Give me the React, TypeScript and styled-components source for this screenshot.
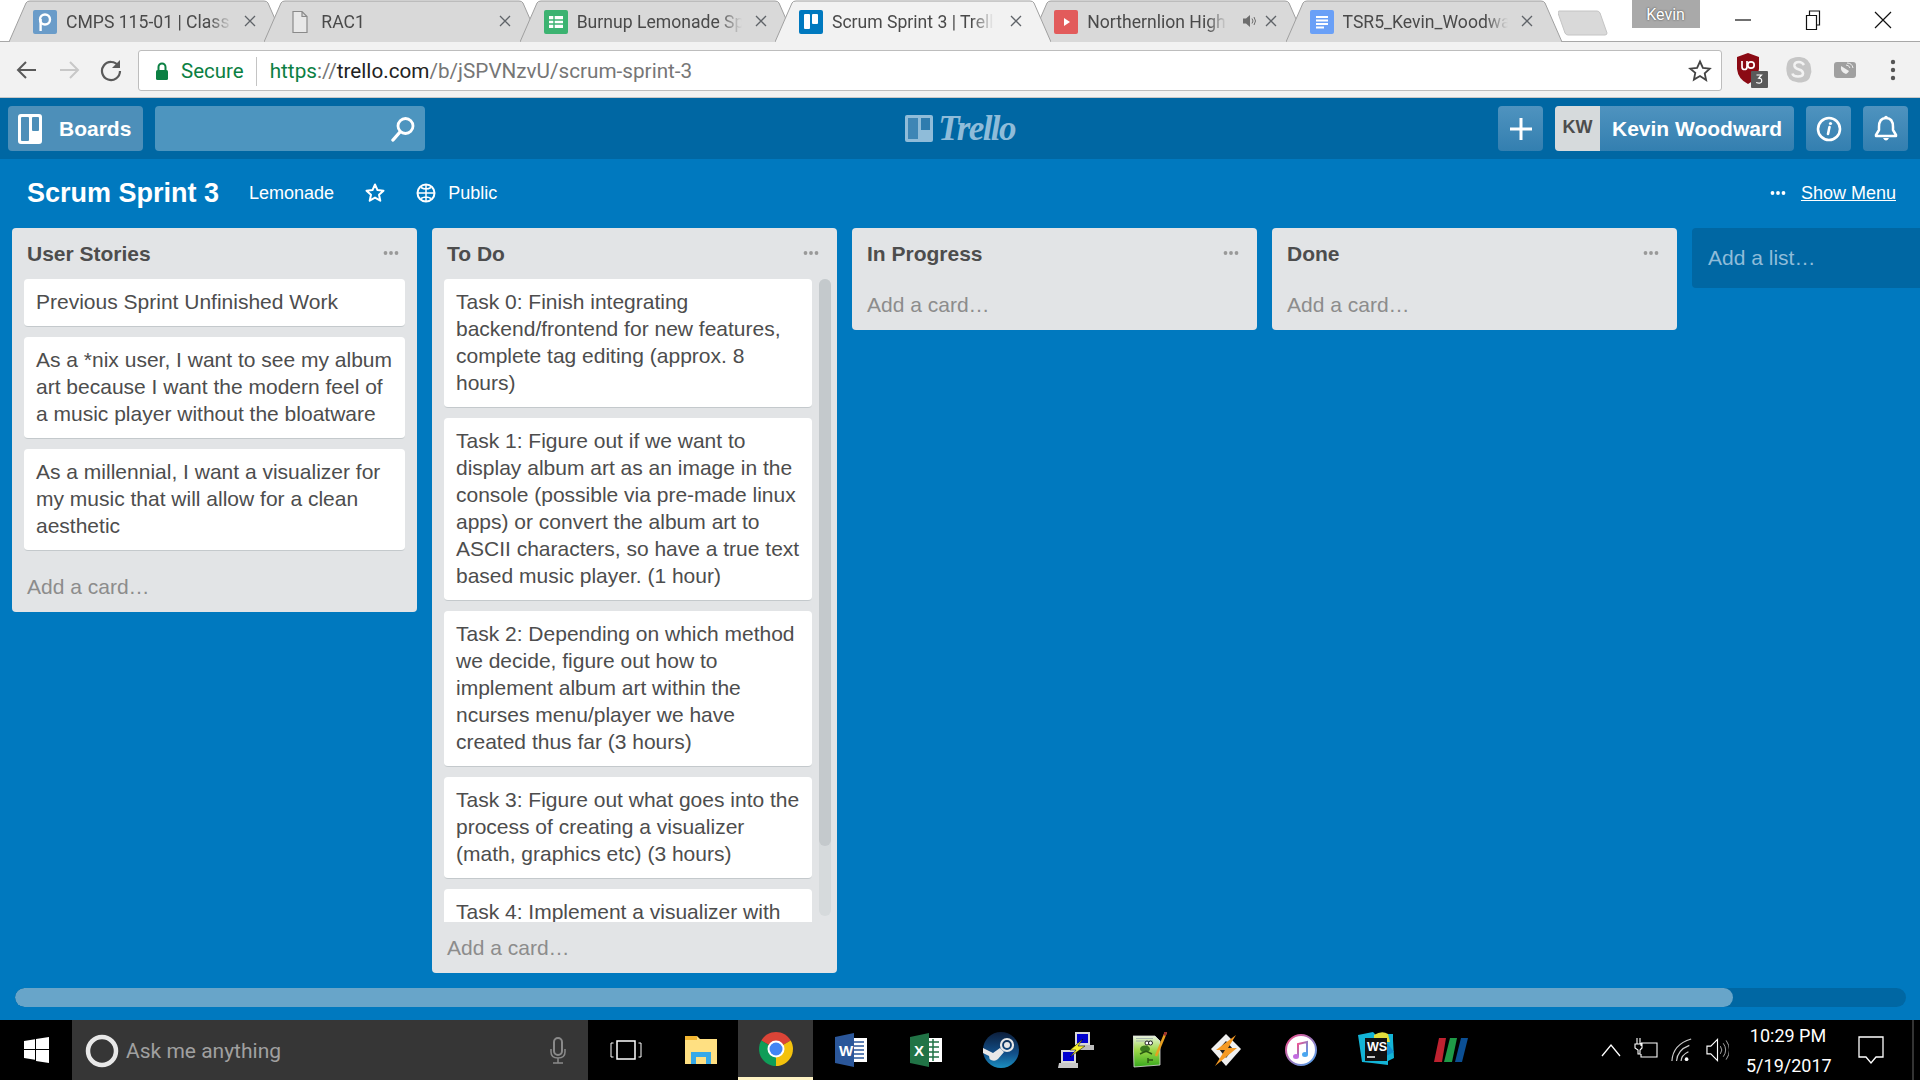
import React from "react";
import styled, { createGlobalStyle } from "styled-components";

const Global = createGlobalStyle`
  html, body { margin: 0; padding: 0; width: 1920px; height: 1080px; overflow: hidden; background: #0079bf; }
  * { box-sizing: border-box; }
`;

const Page = styled.div`
  width: 1920px; height: 1080px; display: flex; flex-direction: column; overflow: hidden;
  background: #0079bf; font-family: "Liberation Sans", Arial, sans-serif;
`;

/* ---------- browser tab strip ---------- */
const TabStrip = styled.div`
  height: 42px; flex: none; background: #fff; display: flex; align-items: flex-start;
  border-bottom: 1px solid #a8a8a8; padding-left: 9px; position: relative;
`;
const Tab = styled.div<{ $active?: boolean }>`
  position: relative; width: 276px; height: 42px; flex: none; margin-right: -20.7px;
  display: flex; align-items: center; padding: 1px 0 0 24px; z-index: ${p => (p.$active ? 5 : 1)};
  font-family: Roboto, sans-serif; font-size: 17.6px; color: #4a4a4a;
`;
const TabShape = styled.svg`
  position: absolute; left: 0; top: 0; width: 100%; height: 100%;
`;
const TabIcon = styled.span`
  position: relative; width: 24px; height: 24px; flex: none; display: flex; margin-right: 9px;
`;
const TabTitle = styled.span<{ $w?: number }>`
  position: relative; width: ${p => p.$w ?? 165}px; flex: none; white-space: nowrap; overflow: hidden;
  -webkit-mask-image: linear-gradient(to right, #000 86%, transparent 100%);
  mask-image: linear-gradient(to right, #000 86%, transparent 100%);
`;
const TabClose = styled.svg`
  position: absolute; right: 29px; top: 15px; width: 12px; height: 12px;
`;
const TabSpeaker = styled.svg`
  position: absolute; right: 48px; top: 13px; width: 16px; height: 16px;
`;
const NewTab = styled.svg`
  width: 50px; height: 26px; flex: none; margin: 10px 0 0 16.7px; position: relative; z-index: 0;
`;
const UserBadge = styled.div`
  width: 68px; height: 28px; flex: none; margin-left: 24px; background: #a9a9a9; color: #fff;
  font-family: Roboto, sans-serif; font-size: 16px; display: flex; align-items: center; justify-content: center;
  text-shadow: 0 0 2px #333;
`;
const WinButtons = styled.div`
  display: flex; flex: none; margin-left: 8px; height: 40px;
`;
const WinButton = styled.div`
  width: 70px; height: 40px; display: flex; align-items: center; justify-content: center;
`;

/* ---------- browser toolbar ---------- */
const Toolbar = styled.div`
  height: 56px; flex: none; background: #f2f2f2; display: flex; align-items: center; padding: 1px 0 0 15px;
  border-bottom: 1px solid #c8c8c8;
`;
const NavIcon = styled.svg`
  width: 24px; height: 24px; flex: none; margin-right: 18px;
`;
const Omnibox = styled.div`
  width: 1584px; height: 41px; flex: none; margin-left: -3px; background: #fff; border: 1px solid #bdbdbd; border-radius: 3px;
  display: flex; align-items: center; padding: 2px 0 0 16px; font-family: Roboto, sans-serif; font-size: 20.7px; color: #767676;
`;
const Secure = styled.span`
  color: #0b8043; margin-left: 12px; padding-right: 12px; border-right: 1px solid #c4c4c4; line-height: 29px; font-size: 20.5px;
`;
const Url = styled.span`
  margin-left: 13px; white-space: nowrap;
`;
const UrlGreen = styled.span` color: #0b8043; `;
const UrlDark = styled.span` color: #222; `;
const Spacer = styled.div` flex: 1; `;
const StarIcon = styled.svg`
  width: 24px; height: 24px; flex: none; margin-right: 9px;
`;
const ExtIcons = styled.div`
  display: flex; align-items: center; gap: 18px; padding-left: 14px;
`;
const ExtIcon = styled.svg<{ $ml?: number }>`
  flex: none; margin-left: ${p => p.$ml ?? 0}px;
`;

/* ---------- trello header ---------- */
const Header = styled.header`
  height: 61px; flex: none; background: #0067a3; display: flex; align-items: center; padding: 0 12px 0 8px; position: relative;
`;
const HeaderButton = styled.div<{ $w: number; $grad?: boolean }>`
  width: ${p => p.$w}px; height: 45px; flex: none; border-radius: 4px; display: flex; align-items: center; justify-content: center;
  background: ${p => (p.$grad ? "linear-gradient(#4f93bf, #337fb0)" : "#4d95bf")}; color: #fff;
`;
const BoardsBtn = styled(HeaderButton)`
  justify-content: flex-start; padding-left: 10px; gap: 17px; font-size: 21px; font-weight: 700; background: #4d8fb9;
`;
const SearchBox = styled.div`
  width: 270px; height: 45px; flex: none; margin-left: 12px; border-radius: 4px; background: #4d95bf;
  display: flex; align-items: center; justify-content: flex-end; padding-right: 9px;
`;
const Logo = styled.div`
  flex: 1; display: flex; align-items: center; justify-content: center; gap: 5px; color: #8fbcd9;
  padding-right: 3px; font-family: "Liberation Serif", serif; font-style: italic; font-size: 35px; letter-spacing: -1.6px;
  font-weight: 700;
`;
const Avatar = styled.span`
  width: 45px; height: 45px; background: #d6dadc; color: #4d4d4d; display: flex; align-items: center; justify-content: center;
  font-size: 18px; font-weight: 700; border-radius: 4px 0 0 4px; flex: none; padding-bottom: 3px;
`;
const UserBtn = styled(HeaderButton)`
  margin: 0 12px; justify-content: flex-start; font-size: 21px; font-weight: 700; gap: 12px;
`;
const BellBtn = styled(HeaderButton)` margin-left: 12px; `;

/* ---------- board bar ---------- */
const BoardBar = styled.div`
  height: 69px; flex: none; display: flex; align-items: center; color: #fff; padding: 0 24px 1px 27px;
`;
const BoardTitle = styled.h1`
  margin: 0; font-size: 27px; font-weight: 700; line-height: 34px;
`;
const BarText = styled.span`
  font-size: 18px; margin-left: 30px;
`;
const BarIcon = styled.svg`
  width: 20px; height: 20px; flex: none; margin-left: 31px;
`;
const BarPublic = styled.span`
  font-size: 18px; margin-left: 12px;
`;
const MenuDots = styled.svg`
  width: 16px; height: 4px; flex: none; margin-right: 15px;
`;
const ShowMenu = styled.span`
  font-size: 18px; text-decoration: underline;
`;

/* ---------- lists ---------- */
const Lists = styled.div`
  height: 760px; flex: none; display: flex; align-items: flex-start; gap: 15px; padding: 0 0 0 12px; overflow: hidden;
`;
const List = styled.section`
  width: 405px; flex: none; background: #e2e4e6; border-radius: 4px; display: flex; flex-direction: column; max-height: 745px;
`;
const ListHead = styled.div`
  height: 51px; flex: none; display: flex; align-items: center; justify-content: space-between; padding: 0 18px 0 15px;
  font-size: 21px; font-weight: 700; color: #4d4d4d;
`;
const HeadDots = styled.svg`
  width: 16px; height: 4px; flex: none; margin-bottom: 1px;
`;
const CardsArea = styled.div`
  display: flex; flex: none; position: relative; height: 643px; overflow: hidden;
`;
const CardsColumn = styled.div`
  display: flex; flex-direction: column; gap: 10px; padding: 0 12px; width: 100%;
`;
const ShortCards = styled(CardsColumn)`
  flex: none; margin-bottom: 10px;
`;
const Card = styled.article`
  flex: none; background: #fff; border-radius: 4px; border-bottom: 1px solid #c4c9cc; padding: 9px 12px 11px 12px;
  font-size: 21px; line-height: 27px; color: #4d4d4d; word-wrap: break-word;
`;
const TodoCard = styled(Card)`
  width: 368px;
`;
const ClippedCard = styled(TodoCard)`
  padding-bottom: 60px;
`;
const ScrollTrack = styled.div`
  position: absolute; right: 6px; top: 0; width: 12px; height: 637px; border-radius: 6px; background: #d6dadc;
`;
const ScrollThumb = styled.div`
  width: 12px; height: 567px; border-radius: 6px; background: #c4c9cc;
`;
const AddCard = styled.div`
  height: 51px; flex: none; display: flex; align-items: center; padding: 0 15px; font-size: 21px; color: #8c8c8c;
`;
const AddList = styled.div`
  width: 240px; height: 60px; flex: none; background: #0067a3; border-radius: 4px; display: flex; align-items: center;
  padding: 0 16px; font-size: 21px; color: #8fbcd9;
`;

/* ---------- horizontal scrollbar ---------- */
const HScrollWrap = styled.div`
  height: 32px; flex: none; padding: 0 14px 0 15px;
`;
const HTrack = styled.div`
  height: 19px; border-radius: 10px; background: #0067a3; overflow: hidden;
`;
const HThumb = styled.div`
  width: 1718px; height: 19px; border-radius: 10px; background: #68a5c9;
`;

/* ---------- taskbar ---------- */
const Taskbar = styled.footer`
  height: 60px; flex: none; background: #000; display: flex; align-items: center; color: #fff;
`;
const StartBtn = styled.div`
  width: 72px; height: 60px; flex: none; display: flex; align-items: center; justify-content: center;
`;
const Cortana = styled.div`
  width: 516px; height: 60px; flex: none; background: #363636; display: flex; align-items: center; padding: 2px 21px 0 13px;
  font-family: Roboto, sans-serif; font-size: 21px; color: #a0a0a0; gap: 7px;
`;
const TaskSlot = styled.div<{ $active?: boolean }>`
  width: 75px; height: 60px; flex: none; display: flex; align-items: center; justify-content: center;
  background: ${p => (p.$active ? "#363636" : "transparent")};
  border-bottom: ${p => (p.$active ? "3px solid #fff3c4" : "none")};
`;
const Tray = styled.div`
  flex: 1; display: flex; align-items: center; justify-content: flex-end; gap: 13px; height: 60px; padding-right: 6px;
`;
const Clock = styled.div`
  width: 84px; text-align: center; font-family: Roboto, sans-serif; font-size: 18px; line-height: 30px; color: #fff;
  margin: 1px -13px 0 4px; white-space: nowrap;
`;
const NotifyBtn = styled.div`
  width: 84px; height: 60px; display: flex; align-items: center; justify-content: center; border-right: 2px solid #333; flex: none;
`;

/* ---------- data ---------- */
const userStories = [
  "Previous Sprint Unfinished Work",
  "As a *nix user, I want to see my album art because I want the modern feel of a music player without the bloatware",
  "As a millennial, I want a visualizer for my music that will allow for a clean aesthetic",
];
const todo = [
  "Task 0: Finish integrating backend/frontend for new features, complete tag editing (approx. 8 hours)",
  "Task 1: Figure out if we want to display album art as an image in the console (possible via pre-made linux apps) or convert the album art to ASCII characters, so have a true text based music player. (1 hour)",
  "Task 2: Depending on which method we decide, figure out how to implement album art within the ncurses menu/player we have created thus far (3 hours)",
  "Task 3: Figure out what goes into the process of creating a visualizer (math, graphics etc) (3 hours)",
];

const Close = () => (
  <TabClose viewBox="0 0 12 12"><path d="M1 1l10 10M11 1L1 11" stroke="#5f6368" strokeWidth="1.3" fill="none" /></TabClose>
);
const Shape = ({ active }: { active?: boolean }) => (
  <TabShape viewBox="0 0 276 42">
    <path d="M0 42 L17 3 Q18 1 21 1 L255 1 Q258 1 259 3 L276 42" fill={active ? "#f2f2f2" : "#d9d9d9"} stroke="#a0a0a0" strokeWidth="1" />
  </TabShape>
);
const Dots = ({ c }: { c: string }) => (
  <>
    <circle cx="2.5" cy="2" r="1.9" fill={c} /><circle cx="8" cy="2" r="1.9" fill={c} /><circle cx="13.5" cy="2" r="1.9" fill={c} />
  </>
);

const IconBox = ({ bg, children }: { bg: string; children?: React.ReactNode }) => (
  <svg width="24" height="24" viewBox="0 0 24 24">
    <rect width="24" height="24" rx="2" fill={bg} />
    {children}
  </svg>
);

export default function App() {
  return (
    <Page>
      <Global />
      <TabStrip>
        <Tab>
          <Shape />
          <TabIcon>
            <IconBox bg="#6a9cc9">
              <circle cx="12" cy="9.5" r="5" fill="none" stroke="#fff" strokeWidth="2.4" />
              <path d="M7.6 9v12" stroke="#fff" strokeWidth="2.4" />
            </IconBox>
          </TabIcon>
          <TabTitle $w={166}>CMPS 115-01 | Class</TabTitle>
          <Close />
        </Tab>
        <Tab>
          <Shape />
          <TabIcon>
            <svg width="24" height="24" viewBox="0 0 24 24">
              <path d="M5 1.5h9l5 5v16H5z M14 1.5v5h5" fill="#e8e8e8" stroke="#8a8a8a" strokeWidth="1.2" />
            </svg>
          </TabIcon>
          <TabTitle>RAC1</TabTitle>
          <Close />
        </Tab>
        <Tab>
          <Shape />
          <TabIcon>
            <IconBox bg="#3cb371">
              <rect x="5" y="6" width="14" height="12" fill="#fff" />
              <path d="M5 10h14M5 14h14M10 6v12" stroke="#3cb371" strokeWidth="1.4" />
            </IconBox>
          </TabIcon>
          <TabTitle>Burnup Lemonade Sprint</TabTitle>
          <Close />
        </Tab>
        <Tab $active>
          <Shape active />
          <TabIcon>
            <IconBox bg="#0079bf">
              <rect x="5" y="4" width="6" height="15" rx="1" fill="#fff" />
              <rect x="13" y="4" width="6" height="10" rx="1" fill="#fff" />
            </IconBox>
          </TabIcon>
          <TabTitle $w={162}>Scrum Sprint 3 | Trello</TabTitle>
          <Close />
        </Tab>
        <Tab>
          <Shape />
          <TabIcon>
            <IconBox bg="#e25b5b">
              <path d="M10 8l6 4-6 4z" fill="#fff" />
            </IconBox>
          </TabIcon>
          <TabTitle $w={140}>Northernlion Highlights</TabTitle>
          <TabSpeaker viewBox="0 0 16 16"><path d="M1 5.5h3l4-3.5v12l-4-3.5H1z" fill="#6d6d6d" /><path d="M10 5.5q2 2.500 0 5M12 4q3 4 0 8" stroke="#6d6d6d" fill="none" /></TabSpeaker>
          <Close />
        </Tab>
        <Tab>
          <Shape />
          <TabIcon>
            <IconBox bg="#6aa0f7">
              <path d="M6 7h12M6 10.5h12M6 14h12M6 17.5h8" stroke="#fff" strokeWidth="1.8" />
            </IconBox>
          </TabIcon>
          <TabTitle>TSR5_Kevin_Woodward</TabTitle>
          <Close />
        </Tab>
        <NewTab viewBox="0 0 50 26">
          <path d="M1 1h38q2 0 3 2l7 20q0 2-2 2H10q-2 0-3-2L0 3q0-2 1-2z" fill="#d9d9d9" stroke="#c4c4c4" />
        </NewTab>
        <UserBadge>Kevin</UserBadge>
        <WinButtons>
          <WinButton><svg width="16" height="16" viewBox="0 0 16 16"><path d="M0 8h16" stroke="#111" strokeWidth="1.2" /></svg></WinButton>
          <WinButton><svg width="16" height="22" viewBox="0 0 16 22"><path d="M1.5 6.5h10v14h-10zM4.5 6V2h10v14h-3" stroke="#111" strokeWidth="1.2" fill="none" /></svg></WinButton>
          <WinButton><svg width="18" height="18" viewBox="0 0 18 18"><path d="M1 1l16 16M17 1L1 17" stroke="#111" strokeWidth="1.2" /></svg></WinButton>
        </WinButtons>
      </TabStrip>

      <Toolbar>
        <NavIcon viewBox="0 0 24 24"><path d="M21 12H4M11 4l-8 8 8 8" stroke="#5a5a5a" strokeWidth="2" fill="none" /></NavIcon>
        <NavIcon viewBox="0 0 24 24"><path d="M3 12h17M13 4l8 8-8 8" stroke="#c8c8c8" strokeWidth="2" fill="none" /></NavIcon>
        <NavIcon viewBox="0 0 24 24"><path d="M19.5 8A9 9 0 1 0 21 13" stroke="#5a5a5a" strokeWidth="2.2" fill="none" /><path d="M21 2v8h-8z" fill="#5a5a5a" /></NavIcon>
        <Omnibox>
          <svg width="14" height="20" viewBox="0 0 14 20"><path d="M3.5 9V6a3.5 3.5 0 0 1 7 0v3" stroke="#0b8043" strokeWidth="2" fill="none" /><rect x="1" y="9" width="12" height="10" rx="1.5" fill="#0b8043" /></svg>
          <Secure>Secure</Secure>
          <Url><UrlGreen>https</UrlGreen>://<UrlDark>trello.com</UrlDark>/b/jSPVNzvU/scrum-sprint-3</Url>
          <Spacer />
          <StarIcon viewBox="0 0 24 24"><path d="M12 2.5l2.9 6.3 6.9.8-5.1 4.7 1.4 6.8L12 17l-6.1 3.6 1.4-6.8L2.2 9.600l6.900-.8z" fill="none" stroke="#444" strokeWidth="1.8" /></StarIcon>
        </Omnibox>
        <ExtIcons>
          <ExtIcon width="32" height="36" viewBox="0 0 32 36">
            <path d="M1 5l11-4 11 4v12q-1 10-11 15Q2 27 1 17z" fill="#8b0a14" />
            <path d="M6 9v6q0 2.500 2.500 2.500T11 15V9" fill="none" stroke="#fff" strokeWidth="1.700" />
            <circle cx="15" cy="13" r="3.200" fill="none" stroke="#fff" strokeWidth="1.700" />
            <rect x="15" y="19" width="17" height="17" rx="1" fill="#5a5a5a" />
            <path d="M20.500 23h5l-2.800 3.200q3.300 0 3 3t-5.500 1.300" stroke="#fff" fill="none" strokeWidth="1.200" />
          </ExtIcon>
          <ExtIcon width="26" height="28" viewBox="0 0 26 28">
            <path d="M7 2q3-1.500 7-1 10 1 11 11 1 4-.500 7-1 6-7 7-4 1-7 0-4 0-7-3-3-4-3-8Q0 12 1 8q1-5 6-6z" fill="#c6c6c6" />
            <path d="M18 9q-2-3-5-3-5 0-4.500 4 .5 2.500 4.500 3.500t4 4-5 3-5.500-3" fill="none" stroke="#f2f2f2" strokeWidth="2.600" />
          </ExtIcon>
          <ExtIcon $ml={3} width="24" height="24" viewBox="0 0 24 24">
            <rect x="1" y="4" width="22" height="16" rx="3" fill="#a0a0a0" />
            <path d="M8 8q-1 6 5 8 2-1 3-3z" fill="#eee" /><path d="M13 7q3 0 4 3M14 5q5 0 6 5" stroke="#eee" fill="none" />
          </ExtIcon>
          <ExtIcon $ml={6} width="24" height="24" viewBox="0 0 24 24">
            <circle cx="12" cy="4" r="2.200" fill="#555" /><circle cx="12" cy="12" r="2.200" fill="#555" /><circle cx="12" cy="20" r="2.200" fill="#555" />
          </ExtIcon>
        </ExtIcons>
      </Toolbar>

      <Header>
        <BoardsBtn $w={135}>
          <svg width="24" height="30" viewBox="0 0 24 30">
            <rect width="24" height="30" rx="3" fill="#fff" />
            <rect x="3" y="3" width="8" height="24" rx="1" fill="#4d8fb9" />
            <rect x="14" y="3" width="7" height="14" rx="1" fill="#4d8fb9" />
          </svg>
          Boards
        </BoardsBtn>
        <SearchBox>
          <svg width="26" height="26" viewBox="0 0 26 26">
            <circle cx="15.500" cy="10" r="7.500" fill="none" stroke="#fff" strokeWidth="2.800" />
            <path d="M10 16l-7 8" stroke="#fff" strokeWidth="3.400" strokeLinecap="round" />
          </svg>
        </SearchBox>
        <Logo>
          <svg width="28" height="27" viewBox="0 0 28 27">
            <rect width="28" height="27" rx="2" fill="#8fbcd9" />
            <rect x="3" y="3" width="10" height="21" fill="#3e86b5" />
            <rect x="16" y="3" width="9" height="12" fill="#2f7cae" />
          </svg>
          Trello
        </Logo>
        <HeaderButton $w={45} $grad>
          <svg width="24" height="24" viewBox="0 0 24 24"><path d="M12 1v22M1 12h22" stroke="#fff" strokeWidth="3" /></svg>
        </HeaderButton>
        <UserBtn $w={239} $grad>
          <Avatar>KW</Avatar>
          Kevin Woodward
        </UserBtn>
        <HeaderButton $w={45} $grad>
          <svg width="26" height="26" viewBox="0 0 26 26">
            <circle cx="13" cy="13" r="11" fill="none" stroke="#fff" strokeWidth="2.600" />
            <path d="M13.500 11l-1.500 7" stroke="#fff" strokeWidth="2.600" strokeLinecap="round" /><circle cx="14.500" cy="7.500" r="1.600" fill="#fff" />
          </svg>
        </HeaderButton>
        <BellBtn $w={45} $grad>
          <svg width="24" height="28" viewBox="0 0 24 28">
            <path d="M12 3q7 0 7 9v3l3 5v1H2v-1l3-5v-3q0-9 7-9z" fill="none" stroke="#fff" strokeWidth="2.500" strokeLinejoin="round" />
            <path d="M9 23q3 5 6 0z" fill="#fff" /><circle cx="12" cy="2.500" r="1.800" fill="#fff" />
          </svg>
        </BellBtn>
      </Header>

      <BoardBar>
        <BoardTitle>Scrum Sprint 3</BoardTitle>
        <BarText>Lemonade</BarText>
        <BarIcon viewBox="0 0 20 20"><path d="M10 1.500l2.500 5.600 6 .6-4.500 4 1.300 6L10 14.600 4.700 17.700l1.300-6-4.500-4 6-.6z" fill="none" stroke="#fff" strokeWidth="2" strokeLinejoin="round" /></BarIcon>
        <BarIcon viewBox="0 0 20 20">
          <circle cx="10" cy="10" r="8.500" fill="none" stroke="#fff" strokeWidth="2" />
          <path d="M10 2v16M2 10h16M5 4.500q5 3 10 0M5 15.500q5-3 10 0" fill="none" stroke="#fff" strokeWidth="1.500" />
        </BarIcon>
        <BarPublic>Public</BarPublic>
        <Spacer />
        <MenuDots viewBox="0 0 16 4"><Dots c="#fff" /></MenuDots>
        <ShowMenu>Show Menu</ShowMenu>
      </BoardBar>

      <Lists>
        <List>
          <ListHead>User Stories<HeadDots viewBox="0 0 16 4"><Dots c="#999" /></HeadDots></ListHead>
          <ShortCards>
            {userStories.map(t => <Card key={t}>{t}</Card>)}
          </ShortCards>
          <AddCard>Add a card…</AddCard>
        </List>
        <List>
          <ListHead>To Do<HeadDots viewBox="0 0 16 4"><Dots c="#999" /></HeadDots></ListHead>
          <CardsArea>
            <CardsColumn>
              {todo.map(t => <TodoCard key={t}>{t}</TodoCard>)}
              <ClippedCard>Task 4: Implement a visualizer with</ClippedCard>
            </CardsColumn>
            <ScrollTrack><ScrollThumb /></ScrollTrack>
          </CardsArea>
          <AddCard>Add a card…</AddCard>
        </List>
        <List>
          <ListHead>In Progress<HeadDots viewBox="0 0 16 4"><Dots c="#999" /></HeadDots></ListHead>
          <AddCard>Add a card…</AddCard>
        </List>
        <List>
          <ListHead>Done<HeadDots viewBox="0 0 16 4"><Dots c="#999" /></HeadDots></ListHead>
          <AddCard>Add a card…</AddCard>
        </List>
        <AddList>Add a list…</AddList>
      </Lists>

      <HScrollWrap><HTrack><HThumb /></HTrack></HScrollWrap>

      <Taskbar>
        <StartBtn>
          <svg width="25" height="26" viewBox="0 0 25 26">
            <path d="M0 4l11-1.700V12H0zM12 2.100L25 0v12H12zM0 13h11v9.700L0 21zM12 13h13v13l-13-2z" fill="#fff" />
          </svg>
        </StartBtn>
        <Cortana>
          <svg width="34" height="34" viewBox="0 0 34 34">
            <circle cx="17" cy="17" r="14" fill="none" stroke="#e8e8e8" strokeWidth="4.500" />
          </svg>
          Ask me anything
          <Spacer />
          <svg width="18" height="28" viewBox="0 0 18 28">
            <rect x="5" y="1" width="8" height="17" rx="4" fill="none" stroke="#8a8a8a" strokeWidth="2" />
            <path d="M2 12v3q0 6 7 6t7-6v-3M9 21v5M4 26h10" fill="none" stroke="#8a8a8a" strokeWidth="1.500" />
          </svg>
        </Cortana>
        <TaskSlot>
          <svg width="32" height="20" viewBox="0 0 32 20">
            <rect x="7" y="1" width="18" height="18" fill="none" stroke="#fff" strokeWidth="1.500" />
            <path d="M3.500 3H1v14h2.500M28.500 3H31v14h-2.500" fill="none" stroke="#fff" />
          </svg>
        </TaskSlot>
        <TaskSlot>
          <svg width="32" height="30" viewBox="0 0 32 30">
            <path d="M0 1h12l3 3h17v25H0z" fill="#ffe082" />
            <path d="M0 1h12v4H0z" fill="#f2b632" />
            <path d="M6 29V17h20v12h-5v-7h-10v7z" fill="#37a9e8" />
          </svg>
        </TaskSlot>
        <TaskSlot $active>
          <svg width="34" height="34" viewBox="0 0 34 34">
            <path d="M17 17 L2.300 8.500A17 17 0 0 1 31.700 8.500z" fill="#db4437" />
            <path d="M17 17 L17 34A17 17 0 0 1 2.300 8.500z" fill="#0f9d58" />
            <path d="M17 17 L31.700 8.500A17 17 0 0 1 17 34z" fill="#f4c20d" />
            <circle cx="17" cy="17" r="8.500" fill="#fff" />
            <circle cx="17" cy="17" r="6.500" fill="#4285f4" />
          </svg>
        </TaskSlot>
        <TaskSlot>
          <svg width="32" height="34" viewBox="0 0 32 34">
            <rect x="14" y="5" width="18" height="24" fill="#fff" />
            <path d="M18 9h11M18 13h11M18 17h11M18 21h11M18 25h11" stroke="#2b579a" strokeWidth="1.500" />
            <path d="M0 4l19-4v34L0 30z" fill="#2b579a" />
            <text x="4" y="23" fontFamily="Liberation Sans" fontSize="15" fontWeight="700" fill="#fff">W</text>
          </svg>
        </TaskSlot>
        <TaskSlot>
          <svg width="32" height="34" viewBox="0 0 32 34">
            <rect x="14" y="5" width="18" height="24" fill="#fff" />
            <path d="M18 9h11M18 14h11M18 19h11M18 24h11M23 6v22" stroke="#217346" strokeWidth="1.500" />
            <path d="M0 4l19-4v34L0 30z" fill="#217346" />
            <text x="4" y="23" fontFamily="Liberation Sans" fontSize="15" fontWeight="700" fill="#fff">X</text>
          </svg>
        </TaskSlot>
        <TaskSlot>
          <svg width="36" height="36" viewBox="0 0 36 36">
            <defs><linearGradient id="steam" x1="0" y1="0" x2="0" y2="1"><stop offset="0" stopColor="#0d1f3c" /><stop offset=".6" stopColor="#12508a" /><stop offset="1" stopColor="#1b8fc0" /></linearGradient></defs>
            <circle cx="18" cy="18" r="18" fill="url(#steam)" />
            <circle cx="24" cy="13" r="6" fill="none" stroke="#e8e8e8" strokeWidth="2.200" />
            <circle cx="24" cy="13" r="3" fill="#e8e8e8" />
            <path d="M0 16l10 5 7-5 4 4-6 7q-3 3-7 1-2-1-2-4L0 21z" fill="#e8e8e8" />
          </svg>
        </TaskSlot>
        <TaskSlot>
          <svg width="36" height="36" viewBox="0 0 36 36">
            <rect x="17" y="0" width="15" height="13" fill="#d8d8d8" /><rect x="19" y="2" width="11" height="9" fill="#0000d0" /><path d="M20 13h16v5H18z" fill="#bdbdbd" />
            <rect x="3" y="18" width="15" height="13" fill="#d8d8d8" /><rect x="5" y="20" width="11" height="9" fill="#0000d0" /><path d="M1 31h19v5H0z" fill="#c8c8c8" />
            <path d="M25 7L12 18h6l-6 7 15-11h-7z" fill="#f7ef2e" stroke="#000" strokeWidth=".5" />
          </svg>
        </TaskSlot>
        <TaskSlot>
          <svg width="36" height="36" viewBox="0 0 36 36">
            <defs><linearGradient id="npp" x1="0" y1="0" x2="0" y2="1"><stop offset="0" stopColor="#e8f4dc" /><stop offset=".45" stopColor="#9fd94a" /><stop offset="1" stopColor="#36a81c" /></linearGradient></defs>
            <path d="M0 4h22l5 5v24L1 35z" fill="url(#npp)" stroke="#ddd" strokeWidth=".8" />
            <path d="M3 6.500h17M3 9h17" stroke="#9aa" strokeWidth=".8" />
            <ellipse cx="12" cy="17" rx="5" ry="3.500" fill="#3c7d1d" /><circle cx="14" cy="11" r="2" fill="#fff" stroke="#222" /><circle cx="17.500" cy="11" r="2" fill="#fff" stroke="#222" />
            <path d="M7 22l6-3 6 3M15 26v5M15 28h5" stroke="#2b5a12" strokeWidth="1.500" fill="none" />
            <path d="M33 0L23 24" stroke="#e8a020" strokeWidth="2.500" /><path d="M33 0l-1.500 3.500" stroke="#a03030" strokeWidth="2.500" />
          </svg>
        </TaskSlot>
        <TaskSlot>
          <svg width="32" height="34" viewBox="0 0 32 34">
            <path d="M16 1l15 15-15 17L1 16z" fill="#f0f0f0" />
            <path d="M16 8l7 8-7 9-7-9z" fill="#222" />
            <path d="M26 2L6 17h9L5 33l22-18h-9z" fill="#f59a23" />
          </svg>
        </TaskSlot>
        <TaskSlot>
          <svg width="32" height="32" viewBox="0 0 32 32">
            <defs><linearGradient id="tunes" x1="0" y1="0" x2="1" y2="1"><stop offset="0" stopColor="#f44b8a" /><stop offset="1" stopColor="#4aa6f0" /></linearGradient></defs>
            <circle cx="16" cy="16" r="15" fill="#fff" stroke="url(#tunes)" strokeWidth="2" />
            <path d="M13 22V10l9-2v12" fill="none" stroke="url(#tunes)" strokeWidth="2" />
            <ellipse cx="11" cy="22.500" rx="3" ry="2.500" fill="#c36be0" /><ellipse cx="20" cy="20.500" rx="3" ry="2.500" fill="#4aa6f0" />
          </svg>
        </TaskSlot>
        <TaskSlot>
          <svg width="36" height="36" viewBox="0 0 36 36">
            <path d="M0 3l15-3 3 3 10-1 7 0v6l1 18-6 3 0 4-16-2-10-1z" fill="#13b4d6" />
            <path d="M16 3q8-5 14-1l2 8-16 0z" fill="#e3de3c" />
            <path d="M28 24l8-4-6-8-2 0z" fill="#0f8fd0" />
            <rect x="7" y="6" width="22" height="23" fill="#111" />
            <text x="9" y="19" fontFamily="Liberation Sans" fontSize="12.500" fontWeight="700" fill="#fff">WS</text>
            <path d="M9 25h8" stroke="#fff" strokeWidth="1.500" />
          </svg>
        </TaskSlot>
        <TaskSlot>
          <svg width="34" height="24" viewBox="0 0 34 24">
            <path d="M5 0h7L8 24H0z" fill="#be2230" />
            <path d="M16 0h7l-5 24h-8z" fill="#1f9a47" />
            <path d="M27 0h7l-6 24h-7z" fill="#0b4f94" />
          </svg>
        </TaskSlot>
        <Tray>
          <svg width="20" height="14" viewBox="0 0 20 14"><path d="M1 13L10 2l9 11" fill="none" stroke="#fff" strokeWidth="1.300" /></svg>
          <svg width="24" height="26" viewBox="0 0 24 26"><path d="M7 6h16v14H7v-3M7 9V6M3 1v6M6 1v6M1 7h7v4l-2 2v4H4v-4l-3-2z" fill="none" stroke="#fff" strokeWidth="1.100" /></svg>
          <svg width="22" height="28" viewBox="0 0 24 28"><path d="M1 26Q2 8 22 2M6 26Q7 14 20 9M11 26q0-6 8-10" fill="none" stroke="#ccc" strokeWidth="1.300" /><circle cx="17" cy="24" r="2" fill="#fff" /></svg>
          <svg width="23" height="26" viewBox="0 0 24 26"><path d="M1 9h4l7-7v22l-7-7H1z" fill="none" stroke="#fff" strokeWidth="1.200" /><path d="M15 9q3 4 0 8M18 6q5 7 0 14M21 3q7 10 0 20" fill="none" stroke="#aaa" /></svg>
          <Clock>10:29 PM<br />5/19/2017</Clock>
          <NotifyBtn>
            <svg width="26" height="28" viewBox="0 0 26 28"><path d="M1 1h24v20h-7l-5 6-5-6H1z" fill="none" stroke="#fff" strokeWidth="1.300" /></svg>
          </NotifyBtn>
        </Tray>
      </Taskbar>
    </Page>
  );
}
